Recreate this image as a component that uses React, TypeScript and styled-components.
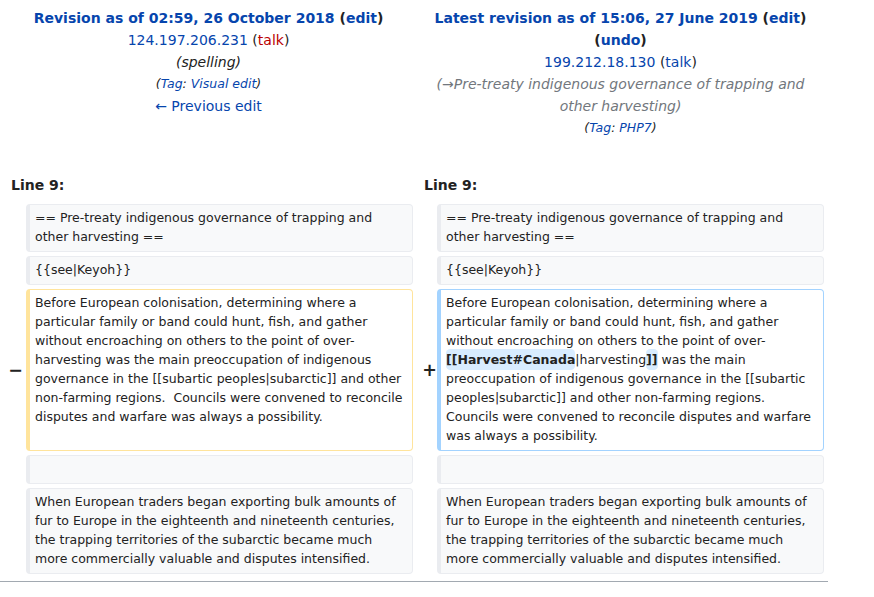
import React from "react";
import styled, { createGlobalStyle } from "styled-components";

const GlobalStyle = createGlobalStyle`
  html, body { margin: 0; padding: 0; background: #fff; }
  body { font-family: "DejaVu Sans", "Liberation Sans", sans-serif; color: #222; }
`;

const Wrapper = styled.div`
  width: 828px;
  padding-bottom: 3px;
  border-bottom: 1px solid #a2a9b1;
`;

const DiffGrid = styled.div`
  display: grid;
  grid-template-columns: 18px 387px 16px 387px;
  column-gap: 4px;
  row-gap: 4px;
  padding: 4px;
`;

const Title = styled.div`
  grid-column: span 2;
  text-align: center;
  font-size: 14px;
  line-height: 22px;
  padding: 3px 7px 27px;
`;

const TitleMain = styled.div`
  font-weight: bold;
`;

const Link = styled.a<{ $tone?: "blue" | "red" }>`
  color: ${(p) => (p.$tone === "red" ? "#ba0000" : "#0645ad")};
  text-decoration: none;
`;

const Comment = styled.div<{ $auto?: boolean }>`
  font-style: italic;
  color: ${(p) => (p.$auto ? "#72777d" : "#222")};
`;

const TagLine = styled.div`
  font-style: italic;
  font-size: 12.5px;
`;

const LineNo = styled.div`
  grid-column: span 2;
  font-weight: bold;
  font-size: 14px;
  line-height: 22px;
  padding: 4px 7px;
`;

const Marker = styled.div<{ $shift?: number }>`
  display: flex;
  align-items: center;
  justify-content: flex-end;
  font-weight: bold;
  font-size: 17.5px;
  line-height: 1.2;
  color: #222;
  margin-right: ${(p) => p.$shift ?? 0}px;
`;

type Kind = "context" | "deleted" | "added";

const borderFor: Record<Kind, string> = {
  context: "#eaecf0",
  deleted: "#ffe49c",
  added: "#a3d3ff",
};

const Cell = styled.div<{ $kind: Kind }>`
  font-size: 12.5px;
  line-height: 19px;
  white-space: pre-wrap;
  overflow-wrap: break-word;
  padding: 3px 5px 5px;
  border: 1px solid ${(p) => borderFor[p.$kind]};
  border-left-width: 4px;
  border-radius: 4px;
  background: ${(p) => (p.$kind === "context" ? "#f8f9fa" : "#fff")};
  color: #222;
  &:empty::after {
    content: "\\00a0";
  }
`;

const Ins = styled.ins`
  text-decoration: none;
  font-weight: bold;
  background: #d8ecff;
  border-radius: 0.33em;
  padding: 0.25em 0;
`;

const heading = "== Pre-treaty indigenous governance of trapping and other harvesting ==";
const see = "{{see|Keyoh}}";
const fur =
  "When European traders began exporting bulk amounts of fur to Europe in the eighteenth and nineteenth centuries, the trapping territories of the subarctic became much more commercially valuable and disputes intensified.";

export default function App() {
  return (
    <>
      <GlobalStyle />
      <Wrapper>
        <DiffGrid>
          <Title>
            <TitleMain>
              <Link>Revision as of 02:59, 26 October 2018</Link> (<Link>edit</Link>)
            </TitleMain>
            <div>
              <Link>124.197.206.231</Link> (<Link $tone="red">talk</Link>)
            </div>
            <Comment>(spelling)</Comment>
            <TagLine>
              (<Link>Tag</Link>: <Link>Visual edit</Link>)
            </TagLine>
            <div>
              <Link>← Previous edit</Link>
            </div>
          </Title>
          <Title>
            <TitleMain>
              <Link>Latest revision as of 15:06, 27 June 2019</Link> (<Link>edit</Link>) (<Link>undo</Link>)
            </TitleMain>
            <div>
              <Link>199.212.18.130</Link> (<Link>talk</Link>)
            </div>
            <Comment $auto>(→Pre-treaty indigenous governance of trapping and other harvesting)</Comment>
            <TagLine>
              (<Link>Tag</Link>: <Link>PHP7</Link>)
            </TagLine>
          </Title>

          <LineNo>Line 9:</LineNo>
          <LineNo>Line 9:</LineNo>

          <Marker />
          <Cell $kind="context">{heading}</Cell>
          <Marker />
          <Cell $kind="context">{heading}</Cell>

          <Marker />
          <Cell $kind="context">{see}</Cell>
          <Marker />
          <Cell $kind="context">{see}</Cell>

          <Marker $shift={-1}>−</Marker>
          <Cell $kind="deleted">
            {
              "Before European colonisation, determining where a particular family or band could hunt, fish, and gather without encroaching on others to the point of over-harvesting was the main preoccupation of indigenous governance in the [[subartic peoples|subarctic]] and other non-farming regions.  Councils were convened to reconcile disputes and warfare was always a possibility."
            }
          </Cell>
          <Marker $shift={-4}>+</Marker>
          <Cell $kind="added">
            {
              "Before European colonisation, determining where a particular family or band could hunt, fish, and gather without encroaching on others to the point of over-"
            }
            <Ins>[[Harvest#Canada</Ins>
            {"|harvesting"}
            <Ins>]]</Ins>
            {
              " was the main preoccupation of indigenous governance in the [[subartic peoples|subarctic]] and other non-farming regions. Councils were convened to reconcile disputes and warfare was always a possibility."
            }
          </Cell>

          <Marker />
          <Cell $kind="context" />
          <Marker />
          <Cell $kind="context" />

          <Marker />
          <Cell $kind="context">{fur}</Cell>
          <Marker />
          <Cell $kind="context">{fur}</Cell>
        </DiffGrid>
      </Wrapper>
    </>
  );
}
